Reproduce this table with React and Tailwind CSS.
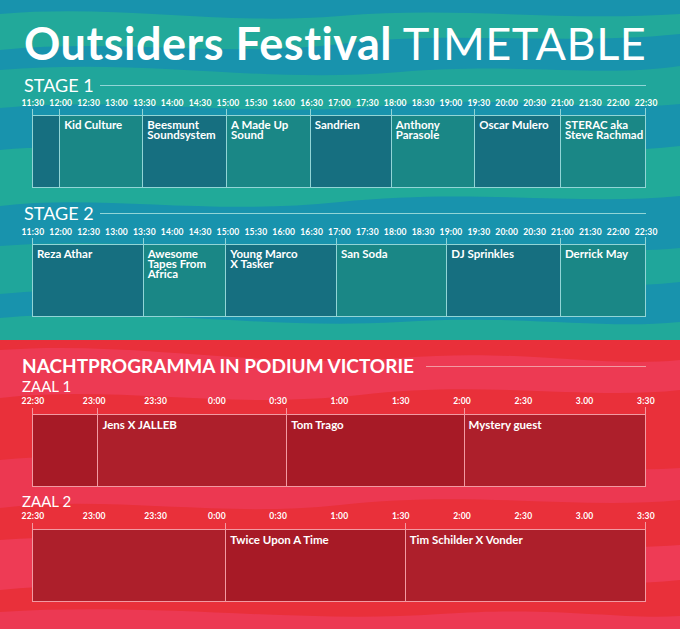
import React from "react";

const FONT = { fontFamily: "Lato, 'Open Sans', sans-serif" };

const stageTimes = [
  "11:30","12:00","12:30","13:00","13:30","14:00","14:30","15:00","15:30","16:00","16:30","17:00",
  "17:30","18:00","18:30","19:00","19:30","20:00","20:30","21:00","21:30","22:00","22:30",
];
const nightTimes = ["22:30","23:00","23:30","0:00","0:30","1:00","1:30","2:00","2:30","3.00","3:30"];

const stage1 = [
  { d: 26.3, name: "", dark: true },
  { d: 83.4, name: "Kid Culture" },
  { d: 84, name: "Beesmunt\nSoundsystem", dark: true },
  { d: 84, name: "A Made Up\nSound" },
  { d: 81.3, name: "Sandrien", dark: true },
  { d: 83.7, name: "Anthony\nParasole" },
  { d: 86, name: "Oscar Mulero", dark: true },
  { d: 85.3, name: "STERAC aka\nSteve Rachmad" },
];
const stage2 = [
  { d: 110, name: "Reza Athar", dark: true },
  { d: 83, name: "Awesome\nTapes From\nAfrica" },
  { d: 111, name: "Young Marco\nX Tasker", dark: true },
  { d: 110.7, name: "San Soda" },
  { d: 114, name: "DJ Sprinkles", dark: true },
  { d: 85.3, name: "Derrick May" },
];
const zaal1 = [
  { d: 64.7, name: "", dark: true },
  { d: 189.3, name: "Jens X JALLEB" },
  { d: 178, name: "Tom Trago", dark: true },
  { d: 182, name: "Mystery guest" },
];
const zaal2 = [
  { d: 193, name: "" },
  { d: 180, name: "Twice Upon A Time", dark: true },
  { d: 241, name: "Tim Schilder X Vonder" },
];

function TimeRow({ times, red }) {
  const w = red ? "w-[40px]" : "w-[28px]";
  const outer = red ? "ml-[13px] w-[653px]" : "ml-[19px] w-[641px]";
  return (
    <div className={`flex justify-between ${outer}`}>
      {times.map((t, i) => (
        <div
          key={i}
          className={`${w} text-center text-[8.5px] leading-[10px] font-bold text-white tracking-[0.2px]`}
        >
          {t}
        </div>
      ))}
    </div>
  );
}

function Timeline({ blocks, red }) {
  const border = red ? "border-[#f29aa2]" : "border-[#92d5d6]";
  const tick = red ? "bg-[#f29aa2]" : "bg-[#92d5d6]";
  const total = blocks.reduce((s, b) => s + b.d, 0);
  return (
    <div className={`relative ml-[32px] w-[614px] h-[73px] flex border ${border}`}>
      {blocks.map((b, i) => {
        const bg = red
          ? b.dark
            ? "bg-[#a71a26]"
            : "bg-[#ad1f2b]"
          : b.dark
          ? "bg-[#166f80]"
          : "bg-[#1a8786]";
        return (
          <div
            key={i}
            style={{ width: `${(b.d / total) * 100}%` }}
            className={`relative shrink-0 min-w-0 ${bg} ${i > 0 ? `border-l ${border}` : ""} pl-[4px] ${red ? "pt-[5px]" : "pt-[4px]"}`}
          >
            <div className={`absolute top-[-7px] left-[-1px] w-px h-[7px] ${tick}`} />
            {b.name.split("\n").map((l, j) => (
              <div key={j} className="text-[11.5px] leading-[10px] font-bold text-white whitespace-nowrap">
                {l}
              </div>
            ))}
          </div>
        );
      })}
      <div className={`absolute top-[-8px] right-[-1px] w-px h-[7px] ${tick}`} />
    </div>
  );
}

function TealBg() {
  return (
    <svg className="absolute inset-0" width="680" height="340" viewBox="0 0 680 340" preserveAspectRatio="none">
      <rect width="680" height="340" fill="#1893ad" />
      <path d="M0 14 C120 4 220 26 340 16 C460 6 560 22 680 14 L680 34 C560 46 450 30 340 44 C220 58 120 38 0 50 Z" fill="#22a99a" />
      <path d="M0 70 C150 58 260 84 400 72 C520 62 600 78 680 66 L680 104 C600 112 500 94 380 106 C250 118 130 96 0 108 Z" fill="#20a69b" />
      <path d="M0 150 C100 140 200 164 340 150 C480 136 580 158 680 146 L680 196 C580 206 470 188 340 202 C210 216 100 194 0 206 Z" fill="#21aa99" />
      <path d="M0 246 C140 236 250 258 380 248 C520 238 600 256 680 248 L680 282 C590 292 500 276 380 288 C240 302 130 282 0 294 Z" fill="#1fa69b" />
      <path d="M0 318 C140 306 260 330 400 322 C520 314 600 330 680 322 L680 340 L0 340 Z" fill="#21a99a" />
    </svg>
  );
}

function RedBg() {
  return (
    <svg className="absolute inset-0" width="680" height="289" viewBox="0 0 680 289" preserveAspectRatio="none">
      <rect width="680" height="289" fill="#e9303a" />
      <path d="M0 10 C140 0 260 30 400 18 C520 8 600 28 680 20 L680 50 C590 60 480 40 360 55 C220 70 120 45 0 58 Z" fill="#ed3a53" />
      <path d="M0 120 C120 108 240 135 360 125 C500 112 590 135 680 128 L680 160 C580 170 470 150 340 165 C220 178 110 155 0 168 Z" fill="#ec3851" />
      <path d="M0 200 C150 190 260 215 400 205 C520 195 600 212 680 205 L680 240 C590 250 480 232 360 245 C220 260 110 238 0 250 Z" fill="#ee3b55" />
      <path d="M0 272 C160 262 300 284 440 274 C560 266 620 280 680 276 L680 289 L0 289 Z" fill="#ec3953" />
    </svg>
  );
}

export default function App() {
  return (
    <div className="w-[680px] h-[629px] overflow-hidden" style={FONT}>
      <div className="relative h-[340px]">
        <TealBg />
        <div className="relative pt-[18px]">
          <div className="ml-[24px] text-[45px] leading-[50px] text-white tracking-[0.5px] whitespace-nowrap">
            <span className="font-bold">Outsiders Festival</span> <span className="font-normal">TIMETABLE</span>
          </div>
          <div className="mt-[7px] ml-[24px] mr-[34px] flex items-center gap-[6px]">
            <div className="text-[18px] leading-[20px] text-white whitespace-nowrap">STAGE 1</div>
            <div className="flex-1 h-px bg-[#92d5d6]" />
          </div>
          <div className="mt-[3px]">
            <TimeRow times={stageTimes} />
          </div>
          <div className="mt-[7px]">
            <Timeline blocks={stage1} />
          </div>
          <div className="mt-[15px] ml-[24px] mr-[34px] flex items-center gap-[6px]">
            <div className="text-[18px] leading-[20px] text-white whitespace-nowrap">STAGE 2</div>
            <div className="flex-1 h-px bg-[#92d5d6]" />
          </div>
          <div className="mt-[4px]">
            <TimeRow times={stageTimes} />
          </div>
          <div className="mt-[7px]">
            <Timeline blocks={stage2} />
          </div>
        </div>
      </div>
      <div className="relative h-[289px]">
        <RedBg />
        <div className="relative pt-[14px]">
          <div className="ml-[22px] mr-[34px] flex items-center gap-[12px]">
            <div className="text-[19px] leading-[24px] font-bold text-white whitespace-nowrap">
              NACHTPROGRAMMA IN PODIUM VICTORIE
            </div>
            <div className="flex-1 h-px bg-[#f29aa2]" />
          </div>
          <div className="ml-[22px] text-[15px] leading-[17px] text-white">ZAAL 1</div>
          <div className="mt-[1px]">
            <TimeRow times={nightTimes} red />
          </div>
          <div className="mt-[8px]">
            <Timeline blocks={zaal1} red />
          </div>
          <div className="mt-[6px] ml-[22px] text-[15px] leading-[17px] text-white">ZAAL 2</div>
          <div className="mt-[1px]">
            <TimeRow times={nightTimes} red />
          </div>
          <div className="mt-[8px]">
            <Timeline blocks={zaal2} red />
          </div>
        </div>
      </div>
    </div>
  );
}
